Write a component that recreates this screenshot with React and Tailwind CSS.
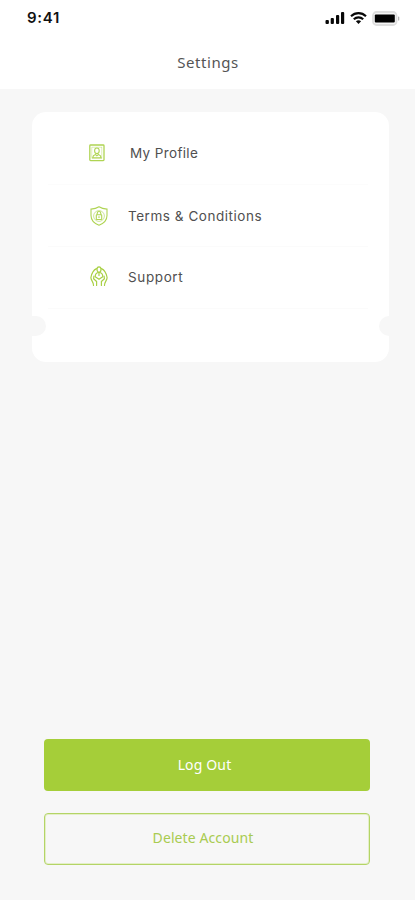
import React from 'react';

const ProfileIcon = () => (
  <svg width="16" height="18" viewBox="0 0 16 18" fill="none" stroke="#afd453" strokeWidth="1.1">
    <rect x="0.8" y="1" width="14.2" height="15.6" rx="0.8" strokeWidth="1.3" />
    <rect x="2.9" y="3.1" width="10" height="11.4" strokeWidth="0.4" />
    <ellipse cx="7.9" cy="6.8" rx="2.3" ry="2.8" />
    <path d="M3.6 13.8c.3-2 1.3-2.7 2.9-3.2l1.4 1.2 1.4-1.2c1.6.5 2.6 1.2 2.9 3.2z" />
  </svg>
);

const ShieldIcon = () => (
  <svg width="18" height="20" viewBox="0 0 18 20" fill="none" stroke="#afd453" strokeWidth="1.1">
    <path d="M9 .8c2.4 1.6 5 2.2 8 2.3v6.3c0 4.6-3 7.8-8 9.8-5-2-8-5.2-8-9.8V3.1C4 3 6.6 2.4 9 .8z" />
    <circle cx="9" cy="10" r="5.4" strokeWidth="0.6" />
    <rect x="6.3" y="8.8" width="5.4" height="4.7" rx="0.5" />
    <path d="M7.2 8.8V7.3a1.8 1.8 0 0 1 3.6 0v1.5M9 10.3v1.7" />
  </svg>
);

const SupportIcon = () => (
  <svg width="18" height="21" viewBox="0 0 18 21" fill="none" stroke="#a9d045" strokeWidth="1.2" strokeLinecap="round" strokeLinejoin="round">
    <path d="M6.5 2.6C3.4 4 1.7 7.200 .9 11.500c-.1 2.900 2.600 4 2.600 8M3.900 10.200l-.3 2.500 3 2.800v3.900" />
    <path d="M11.500 2.600c3.100 1.400 4.800 4.600 5.600 8.900.1 2.900-2.600 4-2.600 8M14.100 10.200l.3 2.500-3 2.800v3.900" />
    <ellipse cx="9" cy="3.600" rx="2" ry="2.700" />
    <path d="M5.200 10.800c0-2.600 1.400-4.300 3.800-4.300s3.800 1.700 3.800 4.300L9 13.300z" />
    <path d="M9 6.500v3" />
  </svg>
);

const items = [
  { label: 'My Profile', icon: <ProfileIcon />, row: 'pl-[57px]', text: 'ml-[25px] tracking-[0.36px]' },
  { label: 'Terms & Conditions', icon: <ShieldIcon />, row: 'pl-[58px] pt-px', text: 'ml-5 tracking-[0.54px]' },
  { label: 'Support', icon: <SupportIcon />, row: 'pl-[58px] pb-px', text: 'ml-5 tracking-[0.62px]' },
];

const StatusBar = () => (
  <div className="flex h-9 items-center justify-between pl-[27px] pr-[15px]">
    <span className="font-['Inter'] text-[15px] font-semibold leading-5 tracking-[0.7px] text-[#111]">9:41</span>
    <div className="flex items-center">
      <svg width="20" height="14" viewBox="0 0 20 14" fill="#080808">
        <rect x="0.5" y="9" width="3.4" height="4" rx="1" />
        <rect x="5.7" y="7" width="3.2" height="6" rx="1" />
        <rect x="11" y="4" width="3.2" height="9" rx="1" />
        <rect x="16" y="1" width="3.2" height="12" rx="1" />
      </svg>
      <svg className="ml-[5px]" width="17" height="14" viewBox="0 0 17 14" fill="none" stroke="#080808" strokeWidth="2.1">
        <path d="M1 5.2c4.3-4.1 10.7-4.1 15 0M3.8 8.300c2.700-2.600 6.700-2.600 9.400 0" />
        <path d="M5.900 10.300c1.500-1.300 3.700-1.300 5.200 0L8.500 13z" fill="#080808" stroke="none" />
      </svg>
      <svg className="ml-[5px]" width="28" height="15" viewBox="0 0 28 15">
        <rect x="1" y="1" width="23.5" height="13" rx="3.5" fill="#f5f5f5" stroke="#dedede" strokeWidth="1.8" />
        <rect x="2.8" y="3.5" width="20" height="8" rx="1" fill="#000" />
        <rect x="26" y="5.5" width="1.3" height="4" rx="0.6" fill="#b5b5b5" />
      </svg>
    </div>
  </div>
);

const App = () => {
  return (
    <div className="flex h-[900px] w-full flex-col bg-[#f7f7f7] font-['Inter',sans-serif]">
      <header className="h-[89px] bg-white">
        <StatusBar />
        <h1 className="mt-4 pl-px text-center font-['Noto_Sans'] text-[15px] leading-5 tracking-[0.55px] text-[#555]">
          Settings
        </h1>
      </header>

      {/* Menu card */}
      <main className="relative ml-8 mt-[23px] h-[250px] w-[357px] overflow-hidden rounded-[14px] bg-white pt-[10px]">
        {items.map((item) => (
          <div key={item.label} className={`flex h-[62px] items-center ${item.row}`}>
            {item.icon}
            <span className={`text-[13.5px] leading-5 text-[#505050] ${item.text}`}>{item.label}</span>
          </div>
        ))}
        <div className="absolute left-4 top-[72px] h-px w-[320px] bg-[#fcfcfc]" />
        <div className="absolute left-4 top-[134px] h-px w-[320px] bg-[#fbfbfb]" />
        <div className="absolute left-4 top-[196px] h-px w-[320px] bg-[#fbfbfb]" />

        {/* Ticket notches */}
        <div className="absolute -left-2.5 top-[204px] h-5 w-6 rounded-full bg-[#f7f7f7]" />
        <div className="absolute -right-2.5 top-[204px] h-5 w-5 rounded-full bg-[#f7f7f7]" />
      </main>

      <footer className="mb-[35px] ml-11 mt-auto flex w-[326px] flex-col gap-[22px] font-['Noto_Sans',sans-serif]">
        <button className="h-[52px] rounded bg-[#a5ce39] pb-[2px] pr-[5px] text-[14px] tracking-[0.15px] text-white">
          Log Out
        </button>
        <button className="h-[52px] rounded border border-[#b4d466] pb-[3px] pr-2 text-[14px] tracking-[0.1px] text-[#a9cb50] shadow-[inset_0_0_0_1px_#e4efc8]">
          Delete Account
        </button>
      </footer>
    </div>
  );
};

export default App;
